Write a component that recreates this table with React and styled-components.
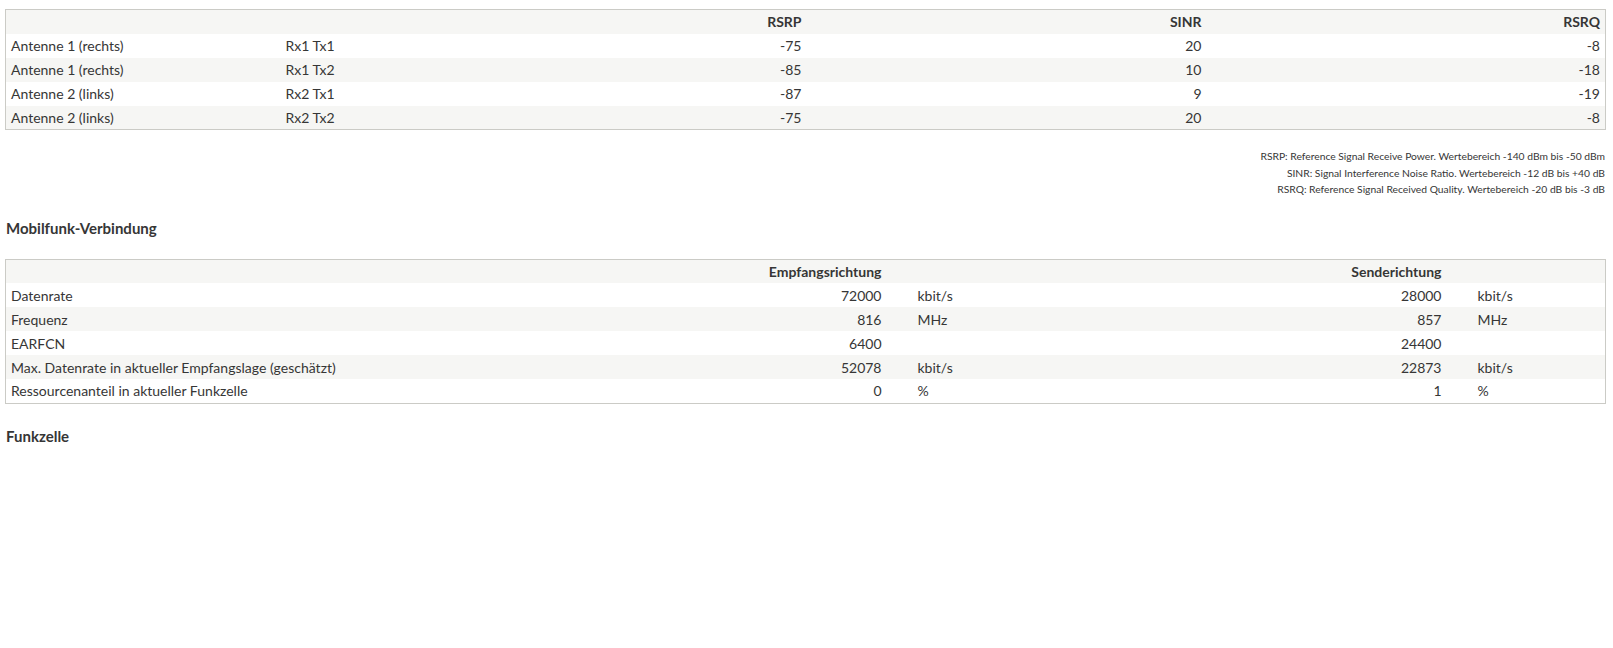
import React from "react";
import styled, { createGlobalStyle } from "styled-components";

const GlobalStyle = createGlobalStyle`
  html, body {
    margin: 0;
    padding: 0;
    background: #ffffff;
  }
  body {
    font-family: Lato, "Liberation Sans", sans-serif;
    color: #363636;
  }
`;

const Page = styled.div`
  padding: 9px 8px 40px 5px;
`;

const Table = styled.table`
  width: 1600px;
  margin-top: ${(p) => p.$top || "0"};
  border-collapse: collapse;
  table-layout: fixed;
  border: 1px solid #cbcbc6;
  font-size: 14px;
`;

const Row = styled.tr`
  height: 24px;
  background: ${(p) => (p.$shaded ? "#f6f6f4" : "#ffffff")};
`;

const Head = styled.th`
  padding: 0 5px;
  font-weight: 700;
  text-align: ${(p) => p.$align || "left"};
  color: #363636;
`;

const Cell = styled.td`
  padding: 0 5px 0 ${(p) => (p.$unit ? "31px" : "5px")};
  text-align: ${(p) => p.$align || "left"};
  white-space: nowrap;
`;

const Notes = styled.div`
  width: 1600px;
  margin-top: 20px;
  display: flex;
  flex-direction: column;
  align-items: flex-end;
  gap: 4px;
  font-size: 10.3px;
  line-height: 12.5px;
`;

const Heading = styled.h3`
  margin: ${(p) => p.$top || "20px"} 0 0 1px;
  font-size: 15px;
  font-weight: 700;
  line-height: 20px;
  color: #363636;
`;

const signal = [
  ["Antenne 1 (rechts)", "Rx1 Tx1", "-75", "20", "-8"],
  ["Antenne 1 (rechts)", "Rx1 Tx2", "-85", "10", "-18"],
  ["Antenne 2 (links)", "Rx2 Tx1", "-87", "9", "-19"],
  ["Antenne 2 (links)", "Rx2 Tx2", "-75", "20", "-8"],
];

const connection = [
  ["Datenrate", "72000", "kbit/s", "28000", "kbit/s"],
  ["Frequenz", "816", "MHz", "857", "MHz"],
  ["EARFCN", "6400", "", "24400", ""],
  ["Max. Datenrate in aktueller Empfangslage (geschätzt)", "52078", "kbit/s", "22873", "kbit/s"],
  ["Ressourcenanteil in aktueller Funkzelle", "0", "%", "1", "%"],
];

const notes = [
  "RSRP: Reference Signal Receive Power. Wertebereich -140 dBm bis -50 dBm",
  "SINR: Signal Interference Noise Ratio. Wertebereich -12 dB bis +40 dB",
  "RSRQ: Reference Signal Received Quality. Wertebereich -20 dB bis -3 dB",
];

export default function App() {
  return (
    <Page>
      <GlobalStyle />
      <Table>
        <colgroup>
          <col style={{ width: 275 }} />
          <col style={{ width: 126 }} />
          <col style={{ width: 400 }} />
          <col style={{ width: 400 }} />
          <col style={{ width: 399 }} />
        </colgroup>
        <thead>
          <Row $shaded>
            <Head />
            <Head />
            <Head $align="right">RSRP</Head>
            <Head $align="right">SINR</Head>
            <Head $align="right">RSRQ</Head>
          </Row>
        </thead>
        <tbody>
          {signal.map((r, i) => (
            <Row key={i} $shaded={i % 2 === 1}>
              <Cell>{r[0]}</Cell>
              <Cell>{r[1]}</Cell>
              <Cell $align="right">{r[2]}</Cell>
              <Cell $align="right">{r[3]}</Cell>
              <Cell $align="right">{r[4]}</Cell>
            </Row>
          ))}
        </tbody>
      </Table>

      <Notes>
        {notes.map((n) => (
          <span key={n}>{n}</span>
        ))}
      </Notes>

      <Heading $top="22px">Mobilfunk-Verbindung</Heading>

      <Table $top="21px">
        <colgroup>
          <col style={{ width: 480 }} />
          <col style={{ width: 401 }} />
          <col style={{ width: 159 }} />
          <col style={{ width: 401 }} />
          <col style={{ width: 159 }} />
        </colgroup>
        <thead>
          <Row $shaded>
            <Head />
            <Head $align="right">Empfangsrichtung</Head>
            <Head />
            <Head $align="right">Senderichtung</Head>
            <Head />
          </Row>
        </thead>
        <tbody>
          {connection.map((r, i) => (
            <Row key={i} $shaded={i % 2 === 1}>
              <Cell>{r[0]}</Cell>
              <Cell $align="right">{r[1]}</Cell>
              <Cell $unit>{r[2]}</Cell>
              <Cell $align="right">{r[3]}</Cell>
              <Cell $unit>{r[4]}</Cell>
            </Row>
          ))}
        </tbody>
      </Table>

      <Heading $top="22px">Funkzelle</Heading>
    </Page>
  );
}
